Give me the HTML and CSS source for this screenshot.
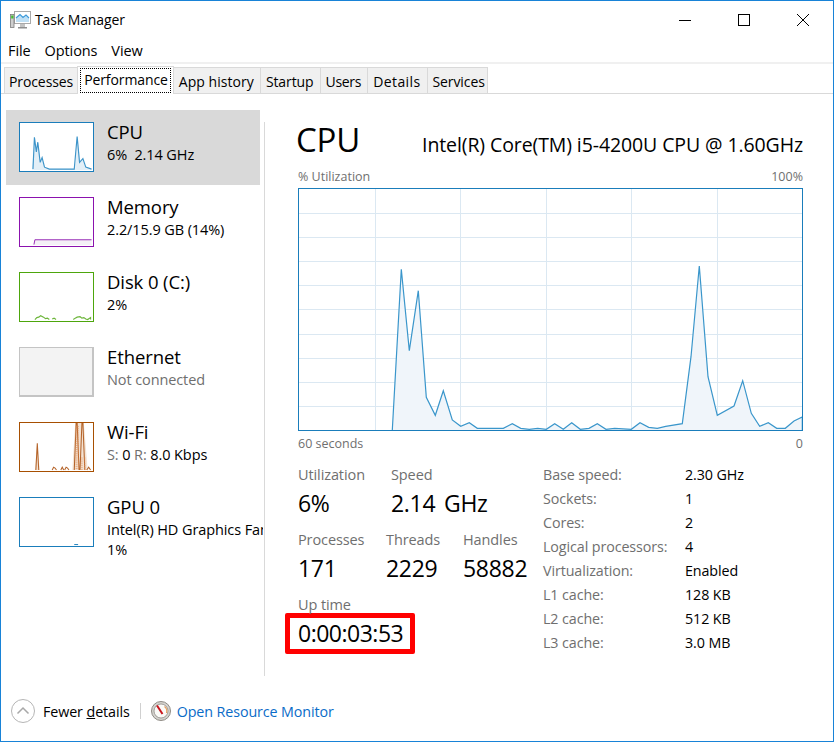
FILE: index.html
```html
<!DOCTYPE html>
<html lang="en">
<head>
<meta charset="utf-8">
<title>Task Manager</title>
<link rel="stylesheet" href="styles.css">
</head>
<body>
<div class="window">
  <header class="titlebar">
    <svg class="app-icon" viewBox="0 0 22 20" width="22" height="20">
      <rect x="4.500" y="1.500" width="16" height="12" fill="#fff" stroke="#a9a9a9"/>
      <path d="M6 11V8L10 4.500L13 7.500L16 5L19 8V12H6Z" fill="#bfe0f5"/>
      <polyline points="6,8 10,4.500 13,7.500 16,5 19,8" fill="none" stroke="#3d9ad9" stroke-width="1.100"/>
      <rect x="0.500" y="4.500" width="3.500" height="13" fill="#cfcfcf" stroke="#7d7d7d" stroke-width="0.800"/>
      <rect x="1.200" y="5.500" width="2.200" height="3" fill="#45c030"/>
      <rect x="10" y="14" width="5" height="3" fill="#c4c4c4"/>
      <rect x="8" y="17" width="9" height="1.500" fill="#8f8f8f"/>
    </svg>
    <span class="app-title">Task Manager</span>
    <div class="win-controls">
      <svg viewBox="0 0 12 12" width="12" height="12"><line x1="0" y1="6.500" x2="12" y2="6.500" stroke="#000"/></svg>
      <svg viewBox="0 0 12 12" width="12" height="12"><rect x="0.500" y="0.500" width="11" height="11" fill="none" stroke="#000"/></svg>
      <svg viewBox="0 0 12 12" width="12" height="12"><path d="M0 0L12 12M12 0L0 12" fill="none" stroke="#000" stroke-width="1"/></svg>
    </div>
  </header>
  <nav class="menu"><span>File</span><span>Options</span><span>View</span></nav>
  <nav class="tabs">
    <span class="tab">Processes</span>
    <span class="tab active"><span class="focus">Performance</span></span>
    <span class="tab t-app">App history</span>
    <span class="tab">Startup</span>
    <span class="tab t-users">Users</span>
    <span class="tab t-details">Details</span>
    <span class="tab">Services</span>
  </nav>
  <div class="content">
    <aside class="sidebar">
      <div class="item selected">
        <svg class="thumb cpu" viewBox="0 0 75 50">
          <path class="spark-halo" d="M12 49L15 15L17 30L18.500 20L21 41L23 37L25 46L30 48L57 48L59.500 14L62 41L65 38L68 46L74 48L74 49Z"/>
          <path class="spark" d="M13 48L14.500 15L16.500 30L18 20L20.500 41L22.500 36L25 46L30 48L56 48L59 14L61.500 41L65 37L68 46L74 48"/>
        </svg>
        <div class="item-text"><div class="item-name">CPU</div><div class="item-sub">6%&nbsp; 2.14 GHz</div></div>
      </div>
      <div class="item">
        <svg class="thumb mem" viewBox="0 0 75 50"><path class="mem-fill" d="M14 49L15 43.500H74V49Z"/><path class="mem-line" d="M14 48.500L15 43.500H74"/></svg>
        <div class="item-text"><div class="item-name">Memory</div><div class="item-sub">2.2/15.9 GB (14%)</div></div>
      </div>
      <div class="item">
        <svg class="thumb disk" viewBox="0 0 75 50"><path class="disk-line" d="M15 48.500L17 46.500L19 46L21 44.500L24 46L26 47.500L28 47L30 48.500M33 48L35 47L37 48.500M55 48.500L57 47L59 46L62 45.500L64 47L66 46.500L68 48L70 48.500L73 46.500V48.500"/></svg>
        <div class="item-text"><div class="item-name">Disk 0 (C:)</div><div class="item-sub">2%</div></div>
      </div>
      <div class="item">
        <div class="thumb ethernet"></div>
        <div class="item-text"><div class="item-name">Ethernet</div><div class="item-sub muted">Not connected</div></div>
      </div>
      <div class="item">
        <svg class="thumb wifi" viewBox="0 0 75 50">
          <path class="wifi-halo" d="M15 49L17.500 20L20 49ZM54 49L57 0H61L66 0L70 49Z"/>
          <path class="wifi-line" d="M16 49L17.500 21L19 49M33 49L34.500 46L36 47L37.500 49M42 49L43.500 46L45 49M46 49L47.500 46L49 47L50.500 49M56 49L58 0M59 0L61 49M62 49L64 0M65 0L67 49M69 49L71 46L73 49"/>
          <path class="wifi-dots" d="M58 3V49M60 3V49M64 36V49M67 36V49"/>
        </svg>
        <div class="item-text"><div class="item-name">Wi-Fi</div><div class="item-sub"><span class="muted">S:</span> 0 <span class="muted">R:</span> 8.0 Kbps</div></div>
      </div>
      <div class="item">
        <svg class="thumb gpu" viewBox="0 0 75 50"><path class="gpu-line" d="M56 48.500H60"/></svg>
        <div class="item-text clip"><div class="item-name">GPU 0</div><div class="item-sub">Intel(R) HD Graphics Family</div><div class="item-sub">1%</div></div>
      </div>
    </aside>
    <main class="main">
      <div class="heading"><h1>CPU</h1><span class="model">Intel(R) Core(TM) i5-4200U CPU @ 1.60GHz</span></div>
      <div class="axis top"><span>% Utilization</span><span>100%</span></div>
      <svg class="chart" viewBox="298 188 505 243" width="505" height="243">
        <g class="grid">
          <path d="M375.500 189V430M460.500 189V430M546.500 189V430M631.500 189V430M717.500 189V430"/>
          <path d="M299 213.500H802M299 237.500H802M299 261.500H802M299 285.500H802M299 309.500H802M299 334.500H802M299 358.500H802M299 382.500H802M299 406.500H802"/>
        </g>
        <polyline class="graph" points="392.300,430 401.300,269.300 409.300,350.700 418.300,290.700 426.300,397.300 435.300,415.300 443.300,390.700 452.300,420 460.700,426.300 469.300,422.700 477.300,428.300 503.300,428.300 512.300,423.700 520.700,428.300 529.300,429.300 537.700,428.300 546.300,429.300 554.700,423.700 563.300,429.300 571.700,422.700 580.300,429.300 589,428.300 597.300,423.700 606,429.300 614.700,428.300 631.300,429.300 640,422.700 648.700,427.300 657.300,428.300 665.700,426.300 682.300,423.700 691,356.700 699.300,266 708,376.700 717.300,415.300 734,406 742.700,380.700 751.300,413.300 759.700,426.300 768.300,422.700 776.700,428.300 785.300,428.300 794,421 802.300,417 802.300,430"/>
        <rect class="frame" x="298.500" y="188.500" width="504" height="242"/>
      </svg>
      <div class="axis bottom"><span>60 seconds</span><span>0</span></div>
      <div class="stats">
        <div class="stats-left">
          <div class="stat-row first">
            <div class="stat w93"><div class="label">Utilization</div><div class="value">6%</div></div>
            <div class="stat"><div class="label">Speed</div><div class="value wide">2.14 GHz</div></div>
          </div>
          <div class="stat-row">
            <div class="stat w88"><div class="label">Processes</div><div class="value">171</div></div>
            <div class="stat w77"><div class="label">Threads</div><div class="value">2229</div></div>
            <div class="stat"><div class="label">Handles</div><div class="value">58882</div></div>
          </div>
          <div class="stat-row">
            <div class="stat"><div class="label">Up time</div><div class="value highlight">0:00:03:53</div></div>
          </div>
        </div>
        <dl class="specs">
          <dt>Base speed:</dt><dd>2.30 GHz</dd>
          <dt>Sockets:</dt><dd>1</dd>
          <dt>Cores:</dt><dd>2</dd>
          <dt>Logical processors:</dt><dd>4</dd>
          <dt>Virtualization:</dt><dd>Enabled</dd>
          <dt>L1 cache:</dt><dd>128 KB</dd>
          <dt>L2 cache:</dt><dd>512 KB</dd>
          <dt>L3 cache:</dt><dd>3.0 MB</dd>
        </dl>
      </div>
    </main>
  </div>
  <footer class="footer">
    <svg class="chevron" viewBox="0 0 24 24" width="24" height="24">
      <circle cx="12" cy="12" r="11.500" fill="#fff" stroke="#b5b5b5"/>
      <path d="M6.500 14.500L12 9L17.500 14.500" fill="none" stroke="#a8a8a8" stroke-width="1.500"/>
    </svg>
    <span class="fewer">Fewer <u>d</u>etails</span>
    <span class="sep"></span>
    <svg class="gauge" viewBox="0 0 20 20" width="20" height="20">
      <circle cx="10" cy="10" r="9.500" fill="#d5d3cf" stroke="#8f8b85"/>
      <circle cx="10" cy="10" r="7" fill="#fbfaf7" stroke="#6f6b66" stroke-width="0.600"/>
      <path d="M13.500 5.500A6 6 0 0 1 15.500 12" fill="none" stroke="#e8a060" stroke-width="1.200"/>
      <path d="M6 4.500L11.500 13" stroke="#c8141c" stroke-width="2"/>
    </svg>
    <a class="link">Open Resource Monitor</a>
  </footer>
</div>
</body>
</html>
```
FILE: styles.css
```css
* { box-sizing: border-box; }
html, body { margin: 0; padding: 0; width: 834px; height: 742px; overflow: hidden; background: #fff; }
body { font-family: "Open Sans", "Noto Sans", sans-serif; color: #000; font-size: 14px; }

.window { width: 834px; height: 742px; border: 1px solid #1883d7; display: flex; flex-direction: column; background: #fff; }

.titlebar { height: 37px; display: flex; align-items: center; padding-left: 9px; flex: none; }
.app-icon { margin-right: 3px; margin-top: 1px; }
.app-title { font-size: 14px; letter-spacing: -0.1px; }
.win-controls { margin-left: auto; display: flex; gap: 47px; padding-right: 24px; }

.menu { height: 24px; display: flex; gap: 14px; padding-left: 7px; align-items: center; flex: none; font-size: 14.500px; letter-spacing: -0.1px; }

.tabs { height: 32px; border-top: 2px solid #f0f0f0; border-bottom: 1px solid #d9d9d9; display: flex; align-items: flex-end; padding-left: 3px; flex: none; margin-bottom: 16px; }
.tab { height: 26px; padding: 1px 6px 0 5px; line-height: 26px; font-size: 14px; letter-spacing: -0.1px; background: #f0f0f0; border: 1px solid #d9d9d9; border-bottom: none; margin-left: -1px; white-space: nowrap; }
.tab:first-child { margin-left: 0; padding: 1px 4px 0; letter-spacing: -0.1px; }
.tab:last-child { padding-right: 2px; }
.t-app { letter-spacing: 0.05px; }
.t-users { letter-spacing: -0.3px; }
.t-details { letter-spacing: 0.4px; }
.tab.active { height: 28px; background: #fff; padding: 1px 2px 0; line-height: 22px; margin-bottom: -1px; position: relative; letter-spacing: -0.1px; }
.focus { display: block; border: 1px dotted #000; padding: 0 2px 0 3px; height: 25px; }

.content { flex: 1; display: flex; min-height: 0; }

.sidebar { width: 264px; margin-left: 5px; flex: none; border-right: 1px solid transparent; position: relative; }
.item { width: 254px; height: 75px; display: flex; padding: 12px 0 0 13px; }
.item.selected { background: #d9d9d9; }
.thumb { width: 75px; height: 50px; flex: none; display: block; background: #fff; border: 1px solid; overflow: hidden; }
.thumb.cpu { border-color: #1a7dbb; }
.thumb.mem { border-color: #8b12ae; }
.thumb.disk { border-color: #4da60c; }
.thumb.ethernet { background: #f3f3f3; border-color: #c4c4c4; border-right-width: 2px; border-bottom-width: 2px; }
.thumb.wifi { border-color: #a74f01; }
.thumb.gpu { border-color: #1a7dbb; }
.spark-halo { fill: #e3eff7; stroke: none; }
.spark { fill: none; stroke: #3d94c9; stroke-width: 1.200; }
.mem-fill { fill: #f4f0f6; }
.mem-line { fill: none; stroke: #9528b4; }
.disk-line { fill: none; stroke: #6cb53a; stroke-width: 1.200; }
.wifi-halo { fill: #f3e3d4; }
.wifi-line { fill: none; stroke: #b5642a; stroke-width: 1.100; }
.wifi-dots { fill: none; stroke: #e08a50; stroke-width: 1; stroke-dasharray: 1 1; }
.gpu-line { fill: none; stroke: #1a7dbb; }
.item-text { margin-left: 13px; white-space: nowrap; }
.item-text.clip { width: 156px; flex: none; overflow: hidden; }
.item-name { font-size: 18.500px; line-height: 20px; letter-spacing: -0.1px; }
.item-sub { font-size: 14.500px; line-height: 20px; margin-top: 3px; letter-spacing: -0.1px; }
.item-sub + .item-sub { margin-top: 0; }
.muted { color: #6f6f6f; }

.main { flex: 1; border-left: 1px solid #d9d9d9; margin-left: -6px; padding-left: 33px; margin-top: 12px; height: 554px; position: relative; }
.heading { display: flex; justify-content: space-between; align-items: baseline; width: 507px; margin-left: -2px; height: 44px; margin-top: -4px; }
.heading h1 { margin: 0; font-size: 33px; line-height: 44px; font-weight: 400; letter-spacing: -0.2px; }
.model { font-size: 19.500px; letter-spacing: -0.1px; }

.axis { width: 505px; display: flex; justify-content: space-between; font-size: 12.500px; color: #6f6f6f; line-height: 16px; }
.axis.top { margin-top: 7px; margin-bottom: 3px; }
.axis.bottom { margin-top: 5px; }
.chart { display: block; }
.grid path { fill: none; stroke: #dbe8f2; stroke-width: 1; }
.graph { fill: #f0f5fa; stroke: #3a96cb; stroke-width: 1.200; }
.frame { fill: none; stroke: #1a7dbb; }

.stats { display: flex; margin-top: 13px; }
.stats-left { width: 245px; flex: none; }
.stat-row { display: flex; height: 65px; }
.stat-row.first { height: 65px; }
.w93 { width: 93px; }
.w88 { width: 88px; }
.w77 { width: 77px; }
.label { font-size: 14.500px; color: #6f6f6f; line-height: 18px; letter-spacing: -0.1px; margin-top: 1px; }
.value { font-size: 23px; line-height: 31px; letter-spacing: -0.3px; margin-top: 4px; }
.value.wide { word-spacing: 3px; }
.highlight { border: 5px solid #f00; border-radius: 2px; margin: -1px 0 0 -13px; padding: 0 8px; width: 130px; height: 41px; line-height: 31px; white-space: nowrap; letter-spacing: -0.5px; }

.specs { margin: 0; display: grid; grid-template-columns: 142px auto; grid-auto-rows: 24px; font-size: 14.300px; letter-spacing: -0.1px; line-height: 18px; align-content: start; }
.specs dt { color: #6f6f6f; margin-top: 1px; }
.specs dd { margin: 1px 0 0; }

.footer { height: 58px; flex: none; display: flex; align-items: center; padding: 0 0 2px 10px; margin-top: auto; font-size: 14.300px; letter-spacing: -0.1px; }
.fewer { margin-left: 8px; }
.sep { width: 1px; height: 16px; background: #d0d0d0; margin: 0 10px; }
.gauge { margin-right: 6px; }
.link { color: #0a6cc8; font-size: 14.300px; }
```
